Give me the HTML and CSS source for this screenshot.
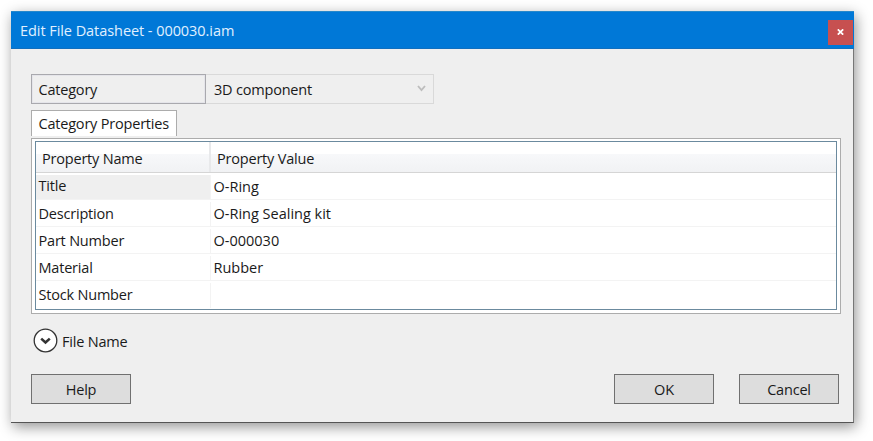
FILE: index.html
```html
<!DOCTYPE html>
<html lang="en">
<head>
<meta charset="utf-8">
<title>Edit File Datasheet</title>
<link rel="stylesheet" href="styles.css">
</head>
<body>
<div class="dialog">
  <header class="titlebar">
    <span class="title">Edit File Datasheet - 000030.iam</span>
    <button class="close" aria-label="Close"><svg width="7" height="6" viewBox="0 0 7 6"><path d="M0.8 0.3L6.2 5.7M6.2 0.3L0.8 5.7" stroke="#fff" stroke-width="1.7"/></svg></button>
  </header>
  <main class="content">
    <div class="category">
      <div class="category-label"><span>Category</span></div>
      <div class="combo"><span>3D component</span><svg width="9" height="7" viewBox="0 0 9 7"><path d="M1 1L4.5 5.2L8 1" fill="none" stroke="#bdbdbd" stroke-width="1.8"/></svg></div>
    </div>
    <div class="tab"><span>Category Properties</span></div>
    <div class="panel">
      <div class="grid">
        <div class="head"><div class="name"><span>Property Name</span></div><div class="value"><span>Property Value</span></div></div>
        <div class="row selected"><div class="name"><span>Title</span></div><div class="value"><span>O-Ring</span></div></div>
        <div class="row"><div class="name"><span>Description</span></div><div class="value"><span>O-Ring Sealing kit</span></div></div>
        <div class="row"><div class="name"><span>Part Number</span></div><div class="value"><span>O-000030</span></div></div>
        <div class="row"><div class="name"><span>Material</span></div><div class="value"><span>Rubber</span></div></div>
        <div class="row"><div class="name"><span>Stock Number</span></div><div class="value"></div></div>
      </div>
    </div>
    <div class="expander">
      <svg width="25" height="25" viewBox="0 0 25 25"><circle cx="12.5" cy="12.5" r="11.3" fill="#fff" stroke="#333" stroke-width="1.3"/><path d="M8.2 10.6L12.5 14.4L16.8 10.6" fill="none" stroke="#333" stroke-width="2.6"/></svg>
      <span>File Name</span>
    </div>
    <footer class="actions">
      <button class="btn help">Help</button>
      <button class="btn">OK</button>
      <button class="btn">Cancel</button>
    </footer>
  </main>
</div>
</body>
</html>
```
FILE: styles.css
```css
* { box-sizing: border-box; }
body {
  margin: 0;
  height: 441px;
  overflow: hidden;
  background: #fff;
  color: #1a1a1a;
  font: 14.5px/20px "Open Sans", "Noto Sans", sans-serif;
  letter-spacing: -0.2px;
  white-space: nowrap;
}
button { font: inherit; letter-spacing: inherit; color: inherit; padding: 0; }
svg { display: block; }
.dialog {
  width: 843px;
  height: 412px;
  margin: 11px 0 0 11px;
  background: #efefef;
  border-right: 1px solid #777;
  border-bottom: 1px solid #555;
  box-shadow: 2px 4px 13px rgba(0, 0, 0, 0.42);
}
.titlebar {
  display: flex;
  align-items: center;
  justify-content: space-between;
  width: 843px;
  height: 38px;
  padding: 0 1px 0 9px;
  background: #0078d7;
  border-top: 1px solid #2688cb;
  border-bottom: 1px solid #116fbe;
  color: #e0f0ff;
}
.title { margin-top: 1px; letter-spacing: -0.06px; }
.close {
  display: flex;
  align-items: center;
  justify-content: center;
  width: 25px;
  height: 25px;
  margin-top: 4px;
  border: 0;
  background: #c75050;
}
.content { padding: 25px 12px 0 20px; }
.category { display: flex; height: 30px; }
.category-label {
  width: 175px;
  padding: 5px 6.5px;
  border: 1px solid #a9a9ae;
  box-shadow: inset 0 0 0 1px #e5e5ea;
}
.combo {
  display: flex;
  justify-content: space-between;
  width: 228px;
  padding: 5px 7px 5px 8px;
  border: 1px solid #d9d9d9;
  border-left: 0;
}
.combo svg { margin-top: 5px; }
.tab {
  width: 146px;
  height: 26px;
  margin-top: 6px;
  padding: 3px 6.5px;
  background: #fff;
  border: 1px solid #acacac;
  border-bottom: 0;
}
.panel {
  width: 810px;
  height: 176px;
  margin-top: 2px;
  padding: 2px 3px 3px;
  background: #fff;
  border: 1px solid #acacac;
}
.grid { height: 169px; border: 1px solid #6b8a9e; }
.head {
  display: flex;
  height: 31px;
  background: linear-gradient(#fff 0 40%, #f7f8fa 41%, #f1f2f4);
  border-bottom: 1px solid #d5d5d5;
}
.name { width: 175px; }
.value { flex: 1; }
.head .name { padding: 7px 6px; border-right: 2px solid #e8e9eb; }
.head .value { padding: 7px 6px; }
.row { display: flex; height: 27px; padding-top: 2px; border-bottom: 1px solid #f3f3f3; }
.row:last-child { border-bottom: 0; }
.row .name { padding: 2px 2.5px 0; border-right: 1px solid #f3f3f3; }
.row .value { padding: 2px 2.5px 0; letter-spacing: 0; }
.row.selected .name { background: #efefef; padding-top: 1px; }
.row.selected .value { padding-top: 2px; }
.expander {
  display: flex;
  align-items: center;
  gap: 4px;
  height: 25px;
  margin: 14px 0 0 2px;
}
.expander span { margin-top: 2px; }
.actions { display: flex; gap: 25px; margin-top: 21px; padding-right: 2px; }
.btn {
  width: 100px;
  height: 30px;
  padding-top: 1px;
  background: #ddd;
  border: 1px solid #707070;
}
.help { margin-right: auto; }
```
